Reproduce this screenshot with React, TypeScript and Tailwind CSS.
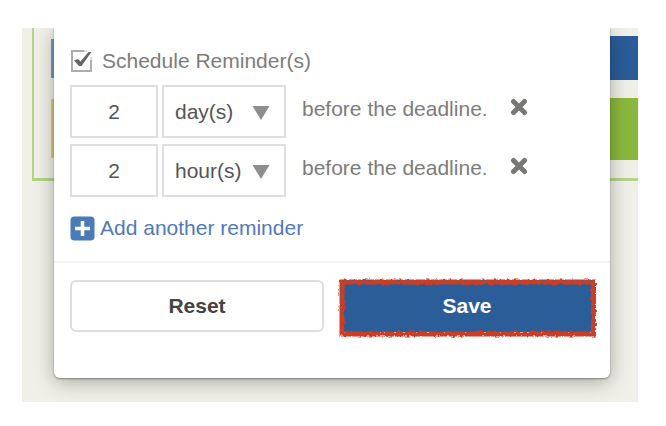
import { useState } from "react";

type Reminder = { id: number; amount: string; unit: string };

function CheckBox() {
  return (
    <span className="relative block h-6 w-6 shrink-0">
      <input
        id="schedule"
        type="checkbox"
        defaultChecked
        className="peer absolute inset-0 h-6 w-6 appearance-none"
      />
      <svg viewBox="0 0 24 24" className="pointer-events-none absolute inset-0 h-6 w-6" fill="none" aria-hidden="true">
        <path d="M14 2H2v20h19V11" stroke="#adadad" strokeWidth="2" />
        <path d="M14 2h3M21 11V8" stroke="#dedede" strokeWidth="2" />
        <path d="M4 11.500 8 10l2.500 2.500 8-9.500h3L11.500 17H9z" fill="#666" />
      </svg>
    </span>
  );
}

function RemoveIcon() {
  return (
    <svg viewBox="0 0 18 18" className="h-[18px] w-[18px]" aria-hidden="true">
      <path d="M3.500 3.500l11 11M14.500 3.500l-11 11" stroke="#777773" strokeWidth="5" strokeLinecap="round" />
    </svg>
  );
}

function ReminderRow({ reminder, onRemove }: { reminder: Reminder; onRemove: () => void }) {
  return (
    <div className="flex items-center">
      <input
        aria-label="Amount"
        defaultValue={reminder.amount}
        className="h-[53px] w-[88px] border-2 border-[#dfdfdf] text-center text-[#555] outline-none"
      />
      <span className="relative ml-1">
        <select
          aria-label="Unit"
          defaultValue={reminder.unit}
          className="h-[53px] w-[124px] appearance-none border-2 border-[#dfdfdf] bg-white pl-[11px] text-[#555] outline-none"
        >
          <option>day(s)</option>
          <option>hour(s)</option>
        </select>
        <svg viewBox="0 0 18 14" className="pointer-events-none absolute top-[21px] right-4 h-[14px] w-[18px]" aria-hidden="true">
          <path d="M0.500 0h17L9 14z" fill="#8e8e8e" />
        </svg>
      </span>
      <span className="ml-4 pb-[6px] whitespace-nowrap text-[#7c7c7c]">before the deadline.</span>
      <button type="button" aria-label="Remove reminder" onClick={onRemove} className="ml-[22px] pb-[10px]">
        <RemoveIcon />
      </button>
    </div>
  );
}

function Backdrop() {
  return (
    <div className="col-start-1 row-start-1 ml-[10px] flex h-[153px] justify-between self-start border-b-[3px] border-l-2 border-[#b3d386]">
      <div className="ml-[17px] flex w-10 flex-col pt-[11px]">
        <div className="h-[39px] bg-[#759bc5]" />
        <div className="mt-[21px] h-[59px] bg-[#e0ca78]" />
      </div>
      <div className="flex w-10 flex-col pt-2">
        <div className="h-11 bg-[#2b5d99]" />
        <div className="mt-[18px] h-[62px] bg-[#8ab83f]" />
      </div>
    </div>
  );
}

function RoughOutline() {
  return (
    <svg className="pointer-events-none absolute inset-0 h-[55px] w-full overflow-visible" aria-hidden="true">
      <filter id="rough" x="-5%" y="-10%" width="110%" height="120%">
        <feTurbulence type="fractalNoise" baseFrequency="0.3" numOctaves="2" seed="4" />
        <feDisplacementMap in="SourceGraphic" scale="4" xChannelSelector="R" yChannelSelector="G" />
      </filter>
      <g filter="url(#rough)">
        <rect x="2" y="2" width="99%" height="52" fill="none" stroke="#cc3d27" strokeWidth="5" />
      </g>
    </svg>
  );
}

export default function App() {
  const [reminders, setReminders] = useState<Reminder[]>([
    { id: 1, amount: "2", unit: "day(s)" },
    { id: 2, amount: "2", unit: "hour(s)" },
  ]);
  const add = () => setReminders((r) => [...r, { id: Date.now(), amount: "1", unit: "day(s)" }]);

  return (
    <div className="bg-white pt-7 pr-7 pb-6 pl-[22px] font-['Liberation_Sans',Arial,sans-serif] text-[21px] leading-7">
      <main className="grid overflow-hidden bg-[#f0f0e8]">
        <Backdrop />
        <section
          aria-label="Reminder settings"
          className="z-10 col-start-1 row-start-1 mr-7 mb-6 ml-8 rounded-b-md bg-white shadow-[0_1px_2px_rgba(0,0,0,0.35),0_4px_20px_rgba(0,0,0,0.3)]"
        >
          <div className="px-4 pt-[19px] pb-[21px]">
            <div className="flex h-7 items-center gap-2">
              <CheckBox />
              <label htmlFor="schedule" className="text-[#7c7c7c]">Schedule Reminder(s)</label>
            </div>
            <div className="mt-[10px] flex flex-col gap-[6px]">
              {reminders.map((r) => (
                <ReminderRow
                  key={r.id}
                  reminder={r}
                  onRemove={() => setReminders((all) => all.filter((x) => x.id !== r.id))}
                />
              ))}
            </div>
            <button type="button" onClick={add} className="mt-[19px] flex h-6 items-center gap-[5px] text-[#5279b9]">
              <svg viewBox="0 0 25 25" className="h-[25px] w-[25px]" aria-hidden="true">
                <rect x="0.500" y="0.500" width="24" height="24" rx="4" fill="#4a7ab8" />
                <path d="M12.500 5v15M5 12.500h15" stroke="#fff" strokeWidth="3.500" />
              </svg>
              Add another reminder
            </button>
          </div>
          <div className="grid grid-cols-2 gap-4 border-t-2 border-[#f3f3f3] px-4 pt-[17px] pb-[46px] font-bold">
            <button type="button" className="h-[52px] rounded-md border-2 border-[#dedede] text-[#444]">Reset</button>
            <button type="button" className="relative h-[52px] bg-[#2b5d99] text-white">
              Save
              <RoughOutline />
            </button>
          </div>
        </section>
      </main>
    </div>
  );
}
